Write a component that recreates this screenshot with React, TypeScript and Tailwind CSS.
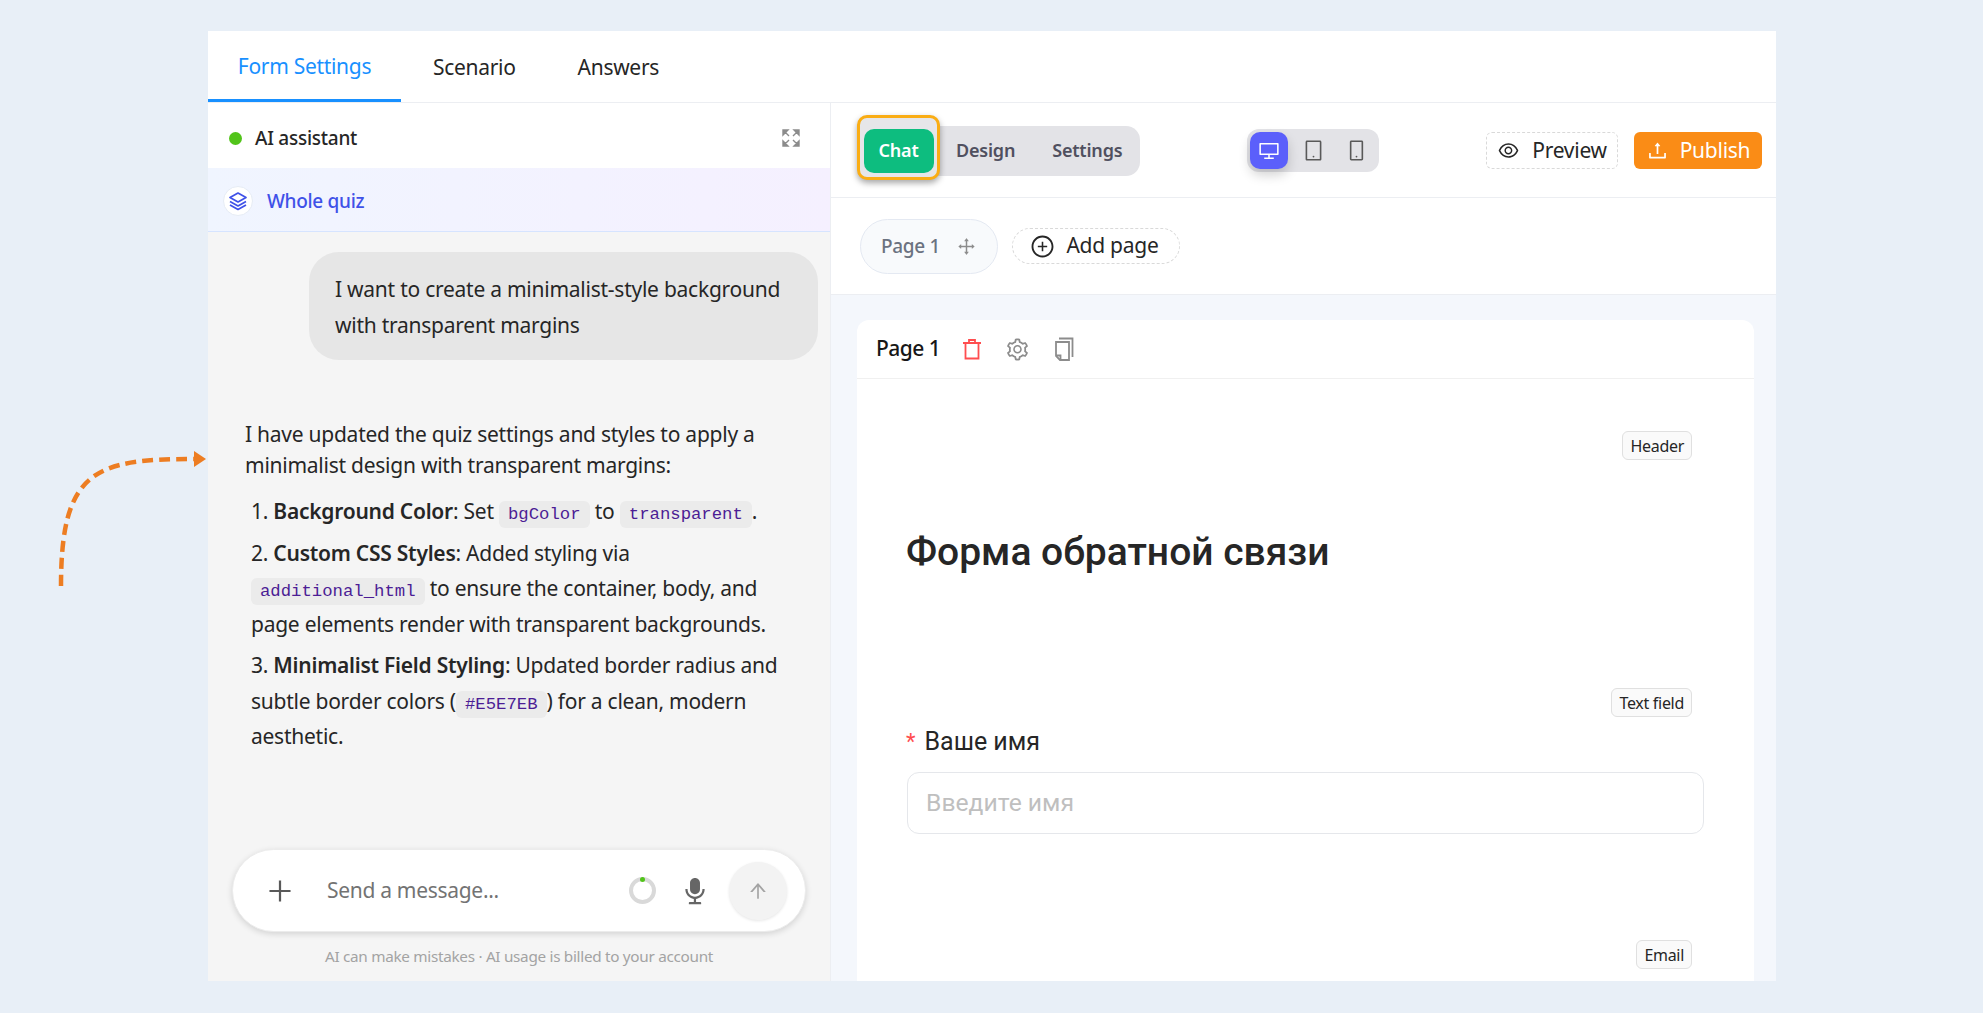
import {
  AiFillAudio,
  AiOutlineArrowUp,
  AiOutlineDesktop,
  AiOutlineDrag,
  AiOutlineEye,
  AiOutlineMobile,
  AiOutlinePlus,
  AiOutlinePlusCircle,
  AiOutlineSetting,
  AiOutlineTablet,
  AiOutlineUpload,
} from "react-icons/ai";

const sans = "font-['Noto_Sans','Open_Sans',sans-serif]";

function ExpandIcon() {
  return (
    <svg width="18" height="18" viewBox="0 0 18 18" fill="#8c8c8c" stroke="#8c8c8c" strokeWidth="1.4">
      <path d="M1 1h5L1 6zM2.500 2.500L7 7" />
      <path d="M17 1h-5l5 5zM15.500 2.500L11 7" />
      <path d="M1 17h5l-5-5zM2.500 15.500L7 11" />
      <path d="M17 17h-5l5-5zM15.500 15.500L11 11" />
    </svg>
  );
}

function StackIcon() {
  return (
    <svg width="20" height="20" viewBox="0 0 20 20" fill="none" stroke="#3f51e8" strokeWidth="1.7" strokeLinejoin="round">
      <path d="M10 2 L18 6.500 L10 11 L2 6.500 Z" />
      <path d="M2 10.500 L10 15 L18 10.500" />
      <path d="M2 14 L10 18.500 L18 14" />
    </svg>
  );
}

function TrashIcon() {
  return (
    <svg width="20" height="22" viewBox="0 0 20 22" fill="none" stroke="#ff4d4f" strokeWidth="1.8">
      <path d="M1 5h18" />
      <path d="M7 5V2h6v3" />
      <path d="M3.500 5v15.500h13V5" />
    </svg>
  );
}

function PagesIcon() {
  return (
    <svg width="20" height="24" viewBox="0 0 20 24" fill="none" stroke="#8c8c8c" strokeWidth="1.8">
      <path d="M5 1.500h13.500V20" />
      <path d="M2 5h13v18H6l-4-4z" />
      <path d="M2 18.500h4.500V23" />
    </svg>
  );
}

function Code({ children }: { children: string }) {
  return (
    <code className="rounded-[6px] bg-[#ebebeb] px-[9px] py-[4px] font-['Liberation_Mono',monospace] text-[17.3px] leading-none tracking-normal text-[#4c1d95]">
      {children}
    </code>
  );
}

function FieldTag({ label }: { label: string }) {
  return (
    <div className="flex justify-end pr-[62px]">
      <span className="flex h-[29px] items-center rounded-[6px] border border-[#e0e0e0] bg-[#fafafa] px-[7px] text-[16px] tracking-[-0.3px] text-[#262626]">
        {label}
      </span>
    </div>
  );
}

function ChatPanel() {
  return (
    <div className="flex w-[623px] shrink-0 flex-col border-r border-[#eceef2] bg-[#f5f5f5]">
      <div className="flex h-[65px] shrink-0 items-center justify-between bg-white pl-[21px] pr-[30px] pt-[5px]">
        <div className="flex items-center gap-[13px]">
          <span className="h-[13px] w-[13px] rounded-full bg-[#52c41a]" />
          <span className="text-[19px] font-medium tracking-[-0.25px] text-[#262626]">AI assistant</span>
        </div>
        <ExpandIcon />
      </div>
      <div className="flex h-[64px] shrink-0 items-center gap-[14px] border-b border-[#d6e4ff] bg-gradient-to-r from-[#f0f5ff] to-[#f5f0ff] pl-[15px] pt-[3px]">
        <span className="flex h-[30px] w-[30px] items-center justify-center rounded-full border border-[#e6ecf5] bg-white">
          <StackIcon />
        </span>
        <span className="text-[19px] font-medium tracking-[-0.3px] text-[#3f51e8]">Whole quiz</span>
      </div>

      <div className="flex min-h-0 flex-1 flex-col">
        <div className="ml-[101px] mr-[12px] mt-[20px] rounded-[30px] bg-[#e6e6e6] px-[26px] pb-[17px] pt-[19px] text-[21px] leading-[36px] tracking-[-0.25px] text-[#262626]">
          I want to create a minimalist-style background with transparent margins
        </div>

        <div className="mt-[59px] pl-[37px] pr-[40px] text-[21px] tracking-[-0.25px] text-[#262626]">
          <p className="leading-[31px]">
            I have updated the quiz settings and styles to apply a minimalist design with transparent margins:
          </p>
          <ol className="mt-[13px] pl-[6px] leading-[35.5px]">
            <li>
              1. <strong className="font-semibold">Background Color</strong>: Set <Code>bgColor</Code> to{" "}
              <Code>transparent</Code>.
            </li>
            <li className="mt-[6px]">
              2. <strong className="font-semibold">Custom CSS Styles</strong>: Added styling via{" "}
              <Code>additional_html</Code> to ensure the container, body, and page elements render with transparent
              backgrounds.
            </li>
            <li className="mt-[6px]">
              3. <strong className="font-semibold">Minimalist Field Styling</strong>: Updated border radius and subtle
              border colors (<Code>#E5E7EB</Code>) for a clean, modern aesthetic.
            </li>
          </ol>
        </div>

        <div className="mt-auto px-[24px]">
          <div className="flex h-[83px] items-center rounded-full border border-[#ececec] bg-white pl-[32px] pr-[18px] shadow-[0_2px_6px_rgba(0,0,0,0.14)]">
            <AiOutlinePlus size={30} className="text-[#595959]" />
            <span className="ml-[32px] flex-1 text-[21px] tracking-[-0.3px] text-[#737373]">Send a message...</span>
            <span className="relative mr-[24px] h-[27px] w-[27px] rounded-full border-[4px] border-[#d9d9d9]">
              <span className="absolute left-[7px] top-[-4px] h-[5px] w-[5px] rounded-full bg-[#52c41a]" />
            </span>
            <AiFillAudio size={30} className="text-[#666666]" />
            <span className="ml-[19px] flex h-[58px] w-[58px] items-center justify-center rounded-full bg-[#f3f3f3] shadow-[0_1px_3px_rgba(0,0,0,0.1)]">
              <AiOutlineArrowUp size={22} className="text-[#a3a3a3]" />
            </span>
          </div>
          <p className="mb-[14px] mt-[14px] text-center text-[15.3px] leading-[21px] tracking-[-0.3px] text-[#a3a3a3]">
            AI can make mistakes · AI usage is billed to your account
          </p>
        </div>
      </div>
    </div>
  );
}

function BuilderPanel() {
  return (
    <div className="flex min-w-0 flex-1 flex-col bg-[#f4f7fc]">
      <div className="flex h-[95px] shrink-0 items-center border-b border-[#eceef2] bg-white pl-[26px] pr-[14px] pt-[1px]">
        <div className="relative flex h-[50px] w-[283px] items-center rounded-[14px] bg-[#e3e3e7] text-[18px] font-semibold tracking-[-0.2px] text-[#50505f]">
          <span className="absolute left-0 top-[-11px] flex h-[65px] w-[83px] items-start justify-center rounded-[10px] border-[3px] border-[#faad14] bg-[#e6e6e9] pt-[11px] shadow-[0_3px_6px_rgba(0,0,0,0.35)]">
            <span className="flex h-[44px] w-[70px] items-center justify-center rounded-[10px] bg-[#0dbd7f] text-white">
              Chat
            </span>
          </span>
          <span className="ml-[99px]">Design</span>
          <span className="ml-[37px]">Settings</span>
        </div>

        <div className="ml-[107px] flex h-[43px] w-[132px] items-center rounded-[12px] bg-[#e3e3e7] pl-[3px]">
          <span className="flex h-[37px] w-[38px] items-center justify-center rounded-[10px] bg-[#5b5ffb] text-white shadow-[0_6px_12px_rgba(0,0,0,0.18)]">
            <AiOutlineDesktop size={22} />
          </span>
          <AiOutlineTablet size={23} className="ml-[14px] text-[#595959]" />
          <AiOutlineMobile size={23} className="ml-[20px] text-[#595959]" />
        </div>

        <div className="ml-auto flex items-center gap-[16px]">
          <div className="flex h-[37px] w-[132px] items-center justify-center gap-[12px] rounded-[6px] border border-dashed border-[#d9d9d9] text-[21px] tracking-[-0.25px] text-[#262626]">
            <AiOutlineEye size={23} />
            Preview
          </div>
          <div className="flex h-[37px] w-[128px] items-center justify-center gap-[11px] rounded-[6px] bg-[#fa8c16] text-[21px] tracking-[-0.25px] text-white">
            <AiOutlineUpload size={23} />
            Publish
          </div>
        </div>
      </div>

      <div className="flex h-[97px] shrink-0 items-center gap-[14px] border-b border-[#eceef2] bg-white pl-[29px]">
        <div className="flex h-[55px] w-[138px] items-center justify-center gap-[16px] rounded-full border border-[#e4e9f2] bg-[#f8fafc] text-[19px] font-medium tracking-[-0.3px] text-[#6b7280]">
          Page 1
          <AiOutlineDrag size={21} className="text-[#8c8c8c]" />
        </div>
        <div className="flex h-[36px] w-[168px] items-center justify-center gap-[11px] rounded-full border border-dashed border-[#d9d9d9] pr-[3px] text-[21px] tracking-[-0.25px] text-[#262626]">
          <AiOutlinePlusCircle size={25} />
          Add page
        </div>
      </div>

      <div className="ml-[26px] mr-[22px] mt-[25px] flex flex-1 flex-col overflow-hidden rounded-t-[12px] bg-white font-['Roboto',sans-serif]">
        <div className={`flex h-[59px] shrink-0 items-center border-b border-[#f0f0f0] pl-[19px] ${sans}`}>
          <span className="text-[21px] font-medium tracking-[-0.5px] text-[#171717]">Page 1</span>
          <span className="ml-[22px]">
            <TrashIcon />
          </span>
          <AiOutlineSetting size={25} className="ml-[23px] text-[#8c8c8c]" />
          <span className="ml-[24px]">
            <PagesIcon />
          </span>
        </div>

        <div className={`mt-[52px] ${sans}`}>
          <FieldTag label="Header" />
        </div>
        <h1 className="ml-[49px] mt-[69px] text-[39px] font-medium leading-[46px] text-[#262626]">
          Форма обратной связи
        </h1>
        <div className={`mt-[113px] ${sans}`}>
          <FieldTag label="Text field" />
        </div>
        <div className="ml-[49px] mt-[11px] flex items-center text-[25px] leading-[28px] text-[#262626]">
          <span className="mr-[9px] text-[22px] text-[#ff4d4f]">*</span>
          Ваше имя
        </div>
        <div className="ml-[50px] mr-[50px] mt-[16px] flex h-[62px] items-center rounded-[12px] border border-[#e5e7eb] pl-[18px] text-[24.7px] text-[#bfbfbf]">
          Введите имя
        </div>
        <div className={`mt-[106px] ${sans}`}>
          <FieldTag label="Email" />
        </div>
      </div>
    </div>
  );
}

export default function App() {
  return (
    <div className={`relative h-[1013px] w-[1983px] overflow-hidden bg-[#e8eff7] pl-[208px] pt-[31px] ${sans}`}>
      <svg className="absolute left-[50px] top-[445px]" width="165" height="150" viewBox="0 0 165 150">
        <path
          d="M11 141 C11 25 45 14 144 14"
          fill="none"
          stroke="#ed7d22"
          strokeWidth="4.5"
          strokeDasharray="11 6"
        />
        <path d="M156 14 L144 6 L144 22 Z" fill="#ed7d22" />
      </svg>

      <div className="flex h-[950px] w-[1568px] flex-col">
        <div className="flex h-[72px] shrink-0 items-stretch border-b border-[#eceef2] bg-white text-[21px] tracking-[-0.3px] text-[#262626]">
          <div className="flex w-[193px] items-center justify-center border-b-[3px] border-[#1890ff] pt-[4px] text-[#1890ff]">
            Form Settings
          </div>
          <div className="ml-[32px] flex items-center pt-[2px]">Scenario</div>
          <div className="ml-[62px] flex items-center pt-[2px]">Answers</div>
        </div>
        <div className="flex min-h-0 flex-1">
          <ChatPanel />
          <BuilderPanel />
        </div>
      </div>
    </div>
  );
}
